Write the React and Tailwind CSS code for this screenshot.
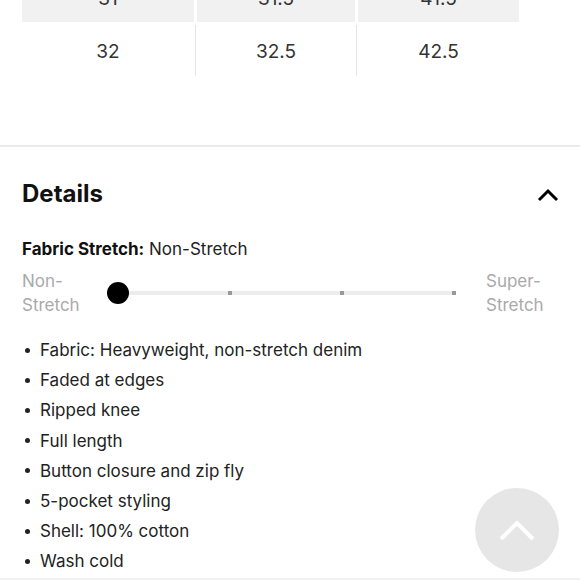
import React from "react";

const items = [
  "Fabric: Heavyweight, non-stretch denim",
  "Faded at edges",
  "Ripped knee",
  "Full length",
  "Button closure and zip fly",
  "5-pocket styling",
  "Shell: 100% cotton",
  "Wash cold",
];

export default function App() {
  return (
    <div
      className="relative w-[580px] h-[580px] overflow-hidden bg-white text-[#222]"
      style={{ fontFamily: "Inter, Roboto, 'Liberation Sans', sans-serif" }}
    >
      {/* size table */}
      <div className="mt-[-28px] pl-[22px]">
        <div className="flex gap-[3px] h-[50px] text-[19px] text-[#333]">
          <div className="w-[172px] bg-[#f1f1f1] flex items-center justify-center pt-[4px]">31</div>
          <div className="w-[158px] bg-[#f1f1f1] flex items-center justify-center pt-[4px]">31.5</div>
          <div className="w-[161px] bg-[#f1f1f1] flex items-center justify-center pt-[4px]">41.5</div>
        </div>
        <div className="flex h-[51px] mt-[3px] text-[19px] text-[#333]">
          <div className="w-[172px] flex items-center justify-center pt-[4px]">32</div>
          <div className="w-[3px] flex justify-center">
            <div className="w-px h-full bg-[#e6e6e6]" />
          </div>
          <div className="w-[158px] flex items-center justify-center pt-[4px]">32.5</div>
          <div className="w-[3px] flex justify-center">
            <div className="w-px h-full bg-[#e6e6e6]" />
          </div>
          <div className="w-[161px] flex items-center justify-center pt-[4px]">42.5</div>
        </div>
      </div>

      <div className="mt-[69px] h-[2px] bg-[#ebebeb]" />

      {/* Details header */}
      <div className="flex items-center justify-between pl-[22px] pr-[21px] mt-[29px] h-[36px]">
        <h2 className="text-[24px] font-bold text-[#111]">Details</h2>
        <svg width="22" height="14" viewBox="0 0 22 14" className="mt-[2px]">
          <path d="M2 12 L11 3 L20 12" fill="none" stroke="#000" strokeWidth="3" />
        </svg>
      </div>

      {/* Fabric stretch */}
      <div className="pl-[22px] mt-[25px] text-[17px] leading-[24px] text-[#222]">
        <span className="font-bold text-[#111]">Fabric Stretch:</span> Non-Stretch
      </div>

      <div className="flex items-center pl-[22px] mt-[8px] text-[17px] leading-[24px] text-[#aaa]">
        <div className="w-[85px]">
          Non-
          <br />
          Stretch
        </div>
        <div className="relative w-[349px] h-[24px] flex items-center">
          <div className="absolute left-[11px] right-[0px] h-[4px] bg-[#ececec]" />
          <div className="absolute left-[121px] w-[4px] h-[4px] bg-[#999]" />
          <div className="absolute left-[233px] w-[4px] h-[4px] bg-[#999]" />
          <div className="absolute left-[345px] w-[4px] h-[4px] bg-[#999]" />
          <div className="absolute left-0 w-[22px] h-[22px] rounded-full bg-black" />
        </div>
        <div className="ml-[30px]">
          Super-
          <br />
          Stretch
        </div>
      </div>

      {/* bullet list */}
      <ul className="pl-[22px] mt-[18px] text-[17px] leading-[30.2px] text-[#222]">
        {items.map((t) => (
          <li key={t} className="flex items-center">
            <span className="w-[18px] flex">
              <span className="ml-[3px] w-[5px] h-[5px] rounded-full bg-[#222]" />
            </span>
            {t}
          </li>
        ))}
      </ul>

      <div className="absolute left-0 right-0 bottom-0 h-[2px] bg-[#f2f2f2]" />

      {/* scroll to top */}
      <button className="absolute left-[475px] top-[488px] w-[84px] h-[84px] rounded-full bg-[#e6e6e6] flex items-center justify-center">
        <svg width="38" height="24" viewBox="0 0 38 24">
          <path d="M3 21 L19 5 L35 21" fill="none" stroke="#fff" strokeWidth="4" />
        </svg>
      </button>
    </div>
  );
}
